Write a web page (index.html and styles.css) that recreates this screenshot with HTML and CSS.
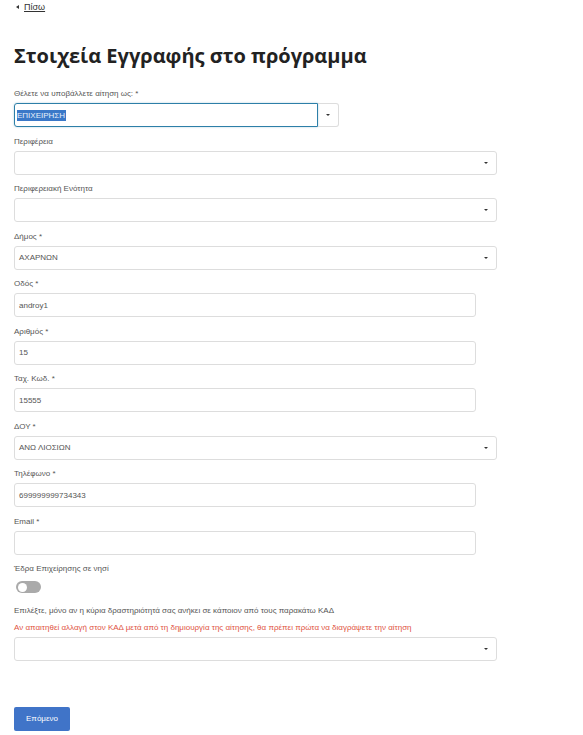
FILE: index.html
```html
<!DOCTYPE html>
<html lang="el">
<head>
    <meta charset="UTF-8">
    <meta name="viewport" content="width=device-width, initial-scale=1.0">
    <title>Στοιχεία Εγγραφής</title>
    <link rel="stylesheet" href="styles.css">
</head>
<body>
    <div class="page">
        <a class="back" href="#"><span class="back-arrow"></span><span class="back-text">Πίσω</span></a>

        <h1 class="title">Στοιχεία Εγγραφής στο πρόγραμμα</h1>

        <form class="form">
            <div class="field">
                <label class="label">Θέλετε να υποβάλλετε αίτηση ως: *</label>
                <div class="combo">
                    <div class="combo-input"><span class="picked">ΕΠΙΧΕΙΡΗΣΗ</span></div>
                    <div class="combo-btn"><span class="caret"></span></div>
                </div>
            </div>

            <div class="field">
                <label class="label">Περιφέρεια</label>
                <div class="select"><span class="value"></span><span class="caret"></span></div>
            </div>

            <div class="field">
                <label class="label">Περιφερειακή Ενότητα</label>
                <div class="select"><span class="value"></span><span class="caret"></span></div>
            </div>

            <div class="field">
                <label class="label">Δήμος *</label>
                <div class="select"><span class="value">ΑΧΑΡΝΩΝ</span><span class="caret"></span></div>
            </div>

            <div class="field">
                <label class="label">Οδός *</label>
                <div class="input">androy1</div>
            </div>

            <div class="field">
                <label class="label">Αριθμός *</label>
                <div class="input">15</div>
            </div>

            <div class="field">
                <label class="label">Ταχ. Κωδ. *</label>
                <div class="input">15555</div>
            </div>

            <div class="field">
                <label class="label">ΔΟΥ *</label>
                <div class="select"><span class="value">ΑΝΩ ΛΙΟΣΙΩΝ</span><span class="caret"></span></div>
            </div>

            <div class="field">
                <label class="label">Τηλέφωνο *</label>
                <div class="input">699999999734343</div>
            </div>

            <div class="field">
                <label class="label">Email *</label>
                <div class="input"></div>
            </div>

            <div class="field field-toggle">
                <label class="label">Έδρα Επιχείρησης σε νησί</label>
                <span class="toggle"><span class="knob"></span></span>
            </div>

            <div class="field">
                <label class="label">Επιλέξτε, μόνο αν η κύρια δραστηριότητά σας ανήκει σε κάποιον από τους παρακάτω ΚΑΔ</label>
                <p class="warning">Αν απαιτηθεί αλλαγή στον ΚΑΔ μετά από τη δημιουργία της αίτησης, θα πρέπει πρώτα να διαγράψετε την αίτηση</p>
                <div class="select"><span class="value"></span><span class="caret"></span></div>
            </div>

            <button class="next-btn" type="button">Επόμενο</button>
        </form>
    </div>
</body>
</html>
```

FILE: styles.css
```css
 body {
     margin: 0;
     background-color: #fff;
     font-family: "Liberation Sans", Arial, sans-serif;
     color: #555;
 }

 .page {
     padding: 1px 14px 0 14px;
 }

 .back {
     display: flex;
     width: max-content;
     align-items: center;
     gap: 5px;
     font-size: 9px;
     line-height: 12px;
     color: #333;
     text-decoration: none;
 }

 .back-arrow {
     width: 0;
     height: 0;
     margin-left: 2px;
     border-top: 2.5px solid transparent;
     border-bottom: 2.5px solid transparent;
     border-right: 3px solid #333;
 }

 .back-text {
     text-decoration: underline;
 }

 .title {
     margin: 29px 0 0 0;
     font-family: "Open Sans", sans-serif;
     font-size: 20px;
     line-height: 28px;
     font-weight: 700;
     color: #222;
 }

 .form {
     margin-top: 19px;
 }

 .field {
     margin-bottom: 9.5px;
 }

 .label {
     display: block;
     font-size: 8px;
     line-height: 10px;
     margin-bottom: 4px;
     color: #555;
 }

 .combo {
     display: flex;
     width: 325px;
     height: 24px;
 }

 .combo-input {
     flex: 1;
     display: flex;
     align-items: center;
     padding: 0 2px;
     border: 1px solid #2d7fa8;
     border-radius: 3px 0 0 3px;
     box-shadow: 0 0 2px rgba(45, 127, 168, 0.4);
 }

 .picked {
     background-color: #3a78c8;
     color: #e8f0fa;
     font-size: 8px;
     line-height: 11px;
     padding-right: 1px;
 }

 .combo-btn {
     width: 20px;
     display: flex;
     align-items: center;
     justify-content: center;
     border: 1px solid #ddd;
     border-left: none;
     border-radius: 0 3px 3px 0;
 }

 .caret {
     width: 0;
     height: 0;
     border-left: 2px solid transparent;
     border-right: 2px solid transparent;
     border-top: 2.5px solid #333;
 }

 .select {
     box-sizing: border-box;
     display: flex;
     align-items: center;
     justify-content: space-between;
     width: 483px;
     height: 24px;
     padding: 0 8px 0 4px;
     border: 1px solid #ddd;
     border-radius: 3px;
     font-size: 8px;
     color: #555;
 }

 .input {
     box-sizing: border-box;
     display: flex;
     align-items: center;
     width: 462px;
     height: 24px;
     padding: 0 4px;
     border: 1px solid #ddd;
     border-radius: 3px;
     font-size: 8px;
     color: #555;
 }

 .field-toggle .label {
     margin-bottom: 7px;
 }

 .field-toggle {
     margin-bottom: 13px;
 }

 .toggle {
     display: flex;
     align-items: center;
     width: 25px;
     height: 12px;
     margin-left: 2px;
     border-radius: 6px;
     background-color: #aaa;
 }

 .knob {
     width: 9px;
     height: 9px;
     margin-left: 2px;
     border-radius: 50%;
     background-color: #fff;
 }

 .warning {
     margin: 7px 0 4px 0;
     font-size: 8px;
     line-height: 10px;
     color: #e0533f;
 }

 .next-btn {
     margin-top: 36px;
     width: 56px;
     height: 24px;
     border: none;
     border-radius: 2px;
     background-color: #4074c8;
     color: #fff;
     font-family: "Liberation Sans", Arial, sans-serif;
     font-size: 8px;
     padding: 0;
 }
```
